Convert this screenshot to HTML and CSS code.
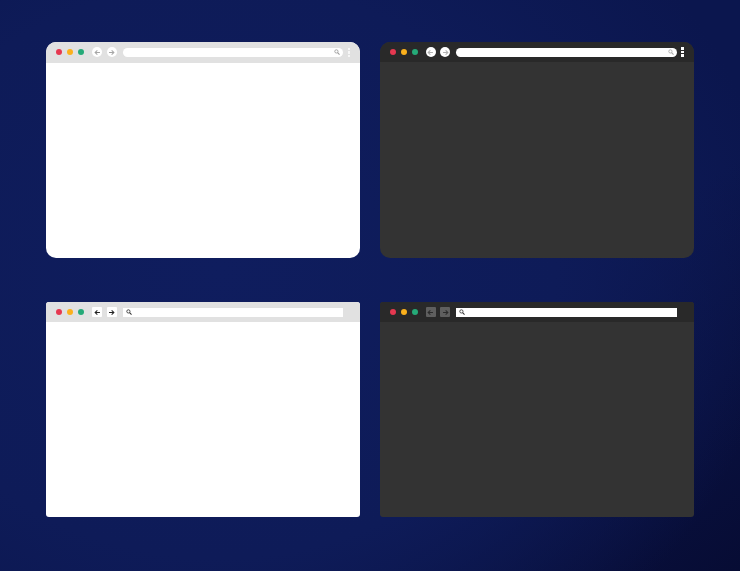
FILE: index.html
```html
<!DOCTYPE html>
<html lang="en">
<head>
  <meta charset="UTF-8">
  <meta name="viewport" content="width=device-width, initial-scale=1.0">
  <title>Browser window mockups</title>
  <link rel="stylesheet" href="styles.css">
</head>
<body>
  <svg class="sprite" aria-hidden="true">
    <symbol id="icon-back" viewBox="0 0 10 10">
      <path d="M8.5 5H2M4.8 1.8 1.6 5l3.2 3.2" fill="none" stroke="currentColor" stroke-width="1.5"/>
    </symbol>
    <symbol id="icon-forward" viewBox="0 0 10 10">
      <path d="M1.5 5H8M5.2 1.8 8.4 5 5.2 8.2" fill="none" stroke="currentColor" stroke-width="1.5"/>
    </symbol>
    <symbol id="icon-search" viewBox="0 0 10 10">
      <circle cx="4" cy="4" r="2.7" fill="none" stroke="currentColor" stroke-width="1.4"/>
      <path d="M6 6 9.2 9.2" stroke="currentColor" stroke-width="1.8"/>
    </symbol>
  </svg>

  <div class="grid">
    <!-- light, rounded -->
    <div class="window window-light window-round">
      <div class="toolbar">
        <div class="dots"><span class="dot red"></span><span class="dot amber"></span><span class="dot green"></span></div>
        <div class="nav">
          <span class="nav-btn"><svg class="arrow"><use href="#icon-back"/></svg></span>
          <span class="nav-btn"><svg class="arrow"><use href="#icon-forward"/></svg></span>
        </div>
        <div class="address address-end"><svg class="search"><use href="#icon-search"/></svg></div>
        <div class="kebab"><span></span><span></span><span></span></div>
      </div>
    </div>

    <!-- dark, rounded -->
    <div class="window window-dark window-round">
      <div class="toolbar">
        <div class="dots"><span class="dot red"></span><span class="dot amber"></span><span class="dot green"></span></div>
        <div class="nav">
          <span class="nav-btn"><svg class="arrow"><use href="#icon-back"/></svg></span>
          <span class="nav-btn"><svg class="arrow"><use href="#icon-forward"/></svg></span>
        </div>
        <div class="address address-end"><svg class="search"><use href="#icon-search"/></svg></div>
        <div class="kebab"><span></span><span></span><span></span></div>
      </div>
    </div>

    <!-- light, square -->
    <div class="window window-light window-square">
      <div class="toolbar">
        <div class="dots"><span class="dot red"></span><span class="dot amber"></span><span class="dot green"></span></div>
        <div class="nav">
          <span class="nav-btn"><svg class="arrow"><use href="#icon-back"/></svg></span>
          <span class="nav-btn"><svg class="arrow"><use href="#icon-forward"/></svg></span>
        </div>
        <div class="address"><svg class="search"><use href="#icon-search"/></svg></div>
      </div>
    </div>

    <!-- dark, square -->
    <div class="window window-dark window-square">
      <div class="toolbar">
        <div class="dots"><span class="dot red"></span><span class="dot amber"></span><span class="dot green"></span></div>
        <div class="nav">
          <span class="nav-btn"><svg class="arrow"><use href="#icon-back"/></svg></span>
          <span class="nav-btn"><svg class="arrow"><use href="#icon-forward"/></svg></span>
        </div>
        <div class="address"><svg class="search"><use href="#icon-search"/></svg></div>
      </div>
    </div>
  </div>
</body>
</html>
```

FILE: styles.css
```css
* {
  margin: 0;
  padding: 0;
  box-sizing: border-box;
}

body {
  height: 571px;
  overflow: hidden;
  font-family: "Liberation Sans", Arial, sans-serif;
  background: radial-gradient(ellipse 560px 480px at 220px 270px, #0f1d5e 0%, #0e1b58 60%, rgba(14, 27, 88, 0) 100%),
    linear-gradient(145deg, #0b164e 0%, #0b164e 62%, #070c34 100%);
}

.sprite {
  display: none;
}

.grid {
  display: grid;
  grid-template-columns: 314px 314px;
  grid-template-rows: 216px 215px;
  column-gap: 20px;
  row-gap: 44px;
  padding: 42px 0 0 46px;
}

/* windows */
.window {
  overflow: hidden;
}

.window-round {
  border-radius: 10px;
}

.window-square {
  border-radius: 3px;
}

.window-light {
  background-color: #fff;
  --bar-color: #e1e1e1;
  --btn-icon: #a6a6a6;
  --search-color: #9a9a9a;
  --kebab-color: #f7f7f7;
}

.window-dark {
  background-color: #333;
  --bar-color: #292929;
  --btn-icon: #b0b0b0;
  --search-color: #a8a8a8;
  --kebab-color: #fff;
}

/* toolbar */
.toolbar {
  display: flex;
  align-items: center;
  height: 20px;
  padding-left: 10px;
  background-color: var(--bar-color);
}

.window-light.window-round .toolbar {
  height: 20.5px;
}

.dots {
  display: flex;
  gap: 5px;
  width: 36px;
}

.window-dark .dots {
  width: 35.5px;
}

.dot {
  width: 6px;
  height: 6px;
  border-radius: 50%;
}

.red { background-color: #e63850; }
.amber { background-color: #fbb01c; }
.green { background-color: #25aa78; }

.nav {
  display: flex;
  gap: 4.5px;
  width: 30.5px;
}

.nav-btn {
  display: flex;
  align-items: center;
  justify-content: center;
  width: 10px;
  height: 10px;
  border-radius: 50%;
  background-color: #fff;
  color: var(--btn-icon);
}

.arrow {
  width: 7px;
  height: 7px;
}

.address {
  display: flex;
  align-items: center;
  width: 220.5px;
  height: 9px;
  padding: 0 3px;
  background-color: #fff;
  color: #333;
}

.address-end {
  justify-content: flex-end;
  border-radius: 5px;
  color: var(--search-color);
}

.search {
  width: 6px;
  height: 6px;
}

.kebab {
  display: flex;
  flex-direction: column;
  gap: 1px;
  margin-left: 4.5px;
}

.kebab span {
  width: 2.5px;
  height: 2.5px;
  background-color: var(--kebab-color);
}

/* square variants */
.window-square .nav-btn {
  border-radius: 1px;
}

.window-light.window-square .nav-btn {
  color: #222;
}

.window-dark.window-square .nav-btn {
  background-color: #5f5f5f;
  color: #2b2b2b;
}
```
